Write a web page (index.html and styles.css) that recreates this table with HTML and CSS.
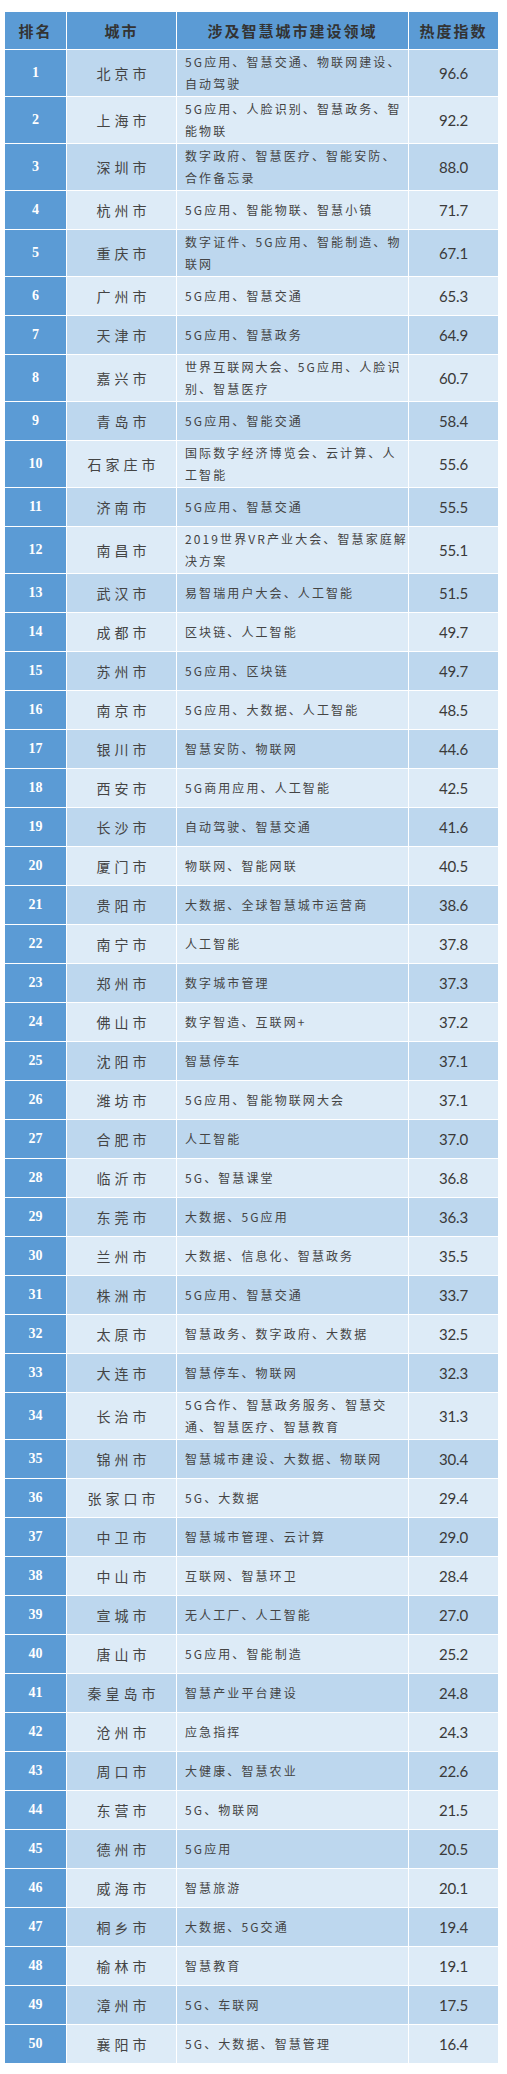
FILE: index.html
```html
<!DOCTYPE html>
<html lang="zh-CN">
<head>
<meta charset="utf-8">
<title>智慧城市热度指数</title>
<link rel="stylesheet" href="styles.css">
</head>
<body>
<table class="rank-table">
  <colgroup>
    <col class="c-rank"><col class="c-city"><col class="c-area"><col class="c-score">
  </colgroup>
  <thead>
    <tr><th>排名</th><th>城市</th><th>涉及智慧城市建设领域</th><th>热度指数</th></tr>
  </thead>
  <tbody>
    <tr class="tall"><td class="rank">1</td><td class="city">北京市</td><td class="area">5G应用、智慧交通、物联网建设、<br>自动驾驶</td><td class="score">96.6</td></tr>
    <tr class="tall"><td class="rank">2</td><td class="city">上海市</td><td class="area">5G应用、人脸识别、智慧政务、智<br>能物联</td><td class="score">92.2</td></tr>
    <tr class="tall"><td class="rank">3</td><td class="city">深圳市</td><td class="area">数字政府、智慧医疗、智能安防、<br>合作备忘录</td><td class="score">88.0</td></tr>
    <tr><td class="rank">4</td><td class="city">杭州市</td><td class="area">5G应用、智能物联、智慧小镇</td><td class="score">71.7</td></tr>
    <tr class="tall"><td class="rank">5</td><td class="city">重庆市</td><td class="area">数字证件、5G应用、智能制造、物<br>联网</td><td class="score">67.1</td></tr>
    <tr><td class="rank">6</td><td class="city">广州市</td><td class="area">5G应用、智慧交通</td><td class="score">65.3</td></tr>
    <tr><td class="rank">7</td><td class="city">天津市</td><td class="area">5G应用、智慧政务</td><td class="score">64.9</td></tr>
    <tr class="tall"><td class="rank">8</td><td class="city">嘉兴市</td><td class="area">世界互联网大会、5G应用、人脸识<br>别、智慧医疗</td><td class="score">60.7</td></tr>
    <tr><td class="rank">9</td><td class="city">青岛市</td><td class="area">5G应用、智能交通</td><td class="score">58.4</td></tr>
    <tr class="tall"><td class="rank">10</td><td class="city">石家庄市</td><td class="area">国际数字经济博览会、云计算、人<br>工智能</td><td class="score">55.6</td></tr>
    <tr><td class="rank">11</td><td class="city">济南市</td><td class="area">5G应用、智慧交通</td><td class="score">55.5</td></tr>
    <tr class="tall"><td class="rank">12</td><td class="city">南昌市</td><td class="area">2019世界VR产业大会、智慧家庭解<br>决方案</td><td class="score">55.1</td></tr>
    <tr><td class="rank">13</td><td class="city">武汉市</td><td class="area">易智瑞用户大会、人工智能</td><td class="score">51.5</td></tr>
    <tr><td class="rank">14</td><td class="city">成都市</td><td class="area">区块链、人工智能</td><td class="score">49.7</td></tr>
    <tr><td class="rank">15</td><td class="city">苏州市</td><td class="area">5G应用、区块链</td><td class="score">49.7</td></tr>
    <tr><td class="rank">16</td><td class="city">南京市</td><td class="area">5G应用、大数据、人工智能</td><td class="score">48.5</td></tr>
    <tr><td class="rank">17</td><td class="city">银川市</td><td class="area">智慧安防、物联网</td><td class="score">44.6</td></tr>
    <tr><td class="rank">18</td><td class="city">西安市</td><td class="area">5G商用应用、人工智能</td><td class="score">42.5</td></tr>
    <tr><td class="rank">19</td><td class="city">长沙市</td><td class="area">自动驾驶、智慧交通</td><td class="score">41.6</td></tr>
    <tr><td class="rank">20</td><td class="city">厦门市</td><td class="area">物联网、智能网联</td><td class="score">40.5</td></tr>
    <tr><td class="rank">21</td><td class="city">贵阳市</td><td class="area">大数据、全球智慧城市运营商</td><td class="score">38.6</td></tr>
    <tr><td class="rank">22</td><td class="city">南宁市</td><td class="area">人工智能</td><td class="score">37.8</td></tr>
    <tr><td class="rank">23</td><td class="city">郑州市</td><td class="area">数字城市管理</td><td class="score">37.3</td></tr>
    <tr><td class="rank">24</td><td class="city">佛山市</td><td class="area">数字智造、互联网+</td><td class="score">37.2</td></tr>
    <tr><td class="rank">25</td><td class="city">沈阳市</td><td class="area">智慧停车</td><td class="score">37.1</td></tr>
    <tr><td class="rank">26</td><td class="city">潍坊市</td><td class="area">5G应用、智能物联网大会</td><td class="score">37.1</td></tr>
    <tr><td class="rank">27</td><td class="city">合肥市</td><td class="area">人工智能</td><td class="score">37.0</td></tr>
    <tr><td class="rank">28</td><td class="city">临沂市</td><td class="area">5G、智慧课堂</td><td class="score">36.8</td></tr>
    <tr><td class="rank">29</td><td class="city">东莞市</td><td class="area">大数据、5G应用</td><td class="score">36.3</td></tr>
    <tr><td class="rank">30</td><td class="city">兰州市</td><td class="area">大数据、信息化、智慧政务</td><td class="score">35.5</td></tr>
    <tr><td class="rank">31</td><td class="city">株洲市</td><td class="area">5G应用、智慧交通</td><td class="score">33.7</td></tr>
    <tr><td class="rank">32</td><td class="city">太原市</td><td class="area">智慧政务、数字政府、大数据</td><td class="score">32.5</td></tr>
    <tr><td class="rank">33</td><td class="city">大连市</td><td class="area">智慧停车、物联网</td><td class="score">32.3</td></tr>
    <tr class="tall"><td class="rank">34</td><td class="city">长治市</td><td class="area">5G合作、智慧政务服务、智慧交<br>通、智慧医疗、智慧教育</td><td class="score">31.3</td></tr>
    <tr><td class="rank">35</td><td class="city">锦州市</td><td class="area">智慧城市建设、大数据、物联网</td><td class="score">30.4</td></tr>
    <tr><td class="rank">36</td><td class="city">张家口市</td><td class="area">5G、大数据</td><td class="score">29.4</td></tr>
    <tr><td class="rank">37</td><td class="city">中卫市</td><td class="area">智慧城市管理、云计算</td><td class="score">29.0</td></tr>
    <tr><td class="rank">38</td><td class="city">中山市</td><td class="area">互联网、智慧环卫</td><td class="score">28.4</td></tr>
    <tr><td class="rank">39</td><td class="city">宣城市</td><td class="area">无人工厂、人工智能</td><td class="score">27.0</td></tr>
    <tr><td class="rank">40</td><td class="city">唐山市</td><td class="area">5G应用、智能制造</td><td class="score">25.2</td></tr>
    <tr><td class="rank">41</td><td class="city">秦皇岛市</td><td class="area">智慧产业平台建设</td><td class="score">24.8</td></tr>
    <tr><td class="rank">42</td><td class="city">沧州市</td><td class="area">应急指挥</td><td class="score">24.3</td></tr>
    <tr><td class="rank">43</td><td class="city">周口市</td><td class="area">大健康、智慧农业</td><td class="score">22.6</td></tr>
    <tr><td class="rank">44</td><td class="city">东营市</td><td class="area">5G、物联网</td><td class="score">21.5</td></tr>
    <tr><td class="rank">45</td><td class="city">德州市</td><td class="area">5G应用</td><td class="score">20.5</td></tr>
    <tr><td class="rank">46</td><td class="city">威海市</td><td class="area">智慧旅游</td><td class="score">20.1</td></tr>
    <tr><td class="rank">47</td><td class="city">桐乡市</td><td class="area">大数据、5G交通</td><td class="score">19.4</td></tr>
    <tr><td class="rank">48</td><td class="city">榆林市</td><td class="area">智慧教育</td><td class="score">19.1</td></tr>
    <tr><td class="rank">49</td><td class="city">漳州市</td><td class="area">5G、车联网</td><td class="score">17.5</td></tr>
    <tr><td class="rank">50</td><td class="city">襄阳市</td><td class="area">5G、大数据、智慧管理</td><td class="score">16.4</td></tr>
  </tbody>
</table>
</body>
</html>
```

FILE: styles.css
```css
html, body {
  margin: 0;
  padding: 0;
  background: #ffffff;
}

body {
  font-family: "Noto Sans CJK SC", "Noto Sans", sans-serif;
  color: #444444;
}

.rank-table {
  margin: 11px 0 0 4px;
  border-collapse: separate;
  border-spacing: 1px;
  table-layout: fixed;
  width: 495px;
  background: #ffffff;
}

.c-rank { width: 61px; }
.c-city { width: 109px; }
.c-area { width: 231px; }
.c-score { width: 89px; }

.rank-table th {
  height: 37px;
  padding: 0;
  background: #5b9bd5;
  color: #333333;
  font-size: 15px;
  font-weight: 700;
  letter-spacing: 2px;
  text-align: center;
  vertical-align: middle;
}

.rank-table td {
  padding: 0;
  vertical-align: middle;
}

.rank-table tbody tr {
  height: 38px;
}

.rank-table tbody tr.tall {
  height: 46px;
}

.rank-table tbody tr:nth-child(odd) td {
  background: #bdd7ee;
}

.rank-table tbody tr:nth-child(even) td {
  background: #ddebf7;
}

.rank-table tbody tr td.rank {
  background: #5b9bd5;
  color: #ffffff;
  font-family: "Liberation Serif", "DejaVu Serif", serif;
  font-weight: 700;
  font-size: 14px;
  text-align: center;
}

.city {
  font-size: 14px;
  letter-spacing: 4px;
  text-align: center;
  padding-left: 4px !important;
}

.area {
  font-size: 12px;
  letter-spacing: 2.1px;
  line-height: 22px;
  white-space: nowrap;
  padding-left: 8px !important;
}

.score {
  font-family: "Lato", "Liberation Sans", sans-serif;
  font-size: 15px;
  font-weight: 400;
  letter-spacing: -0.2px;
  text-align: center;
  color: #3a3a3a;
}
```
